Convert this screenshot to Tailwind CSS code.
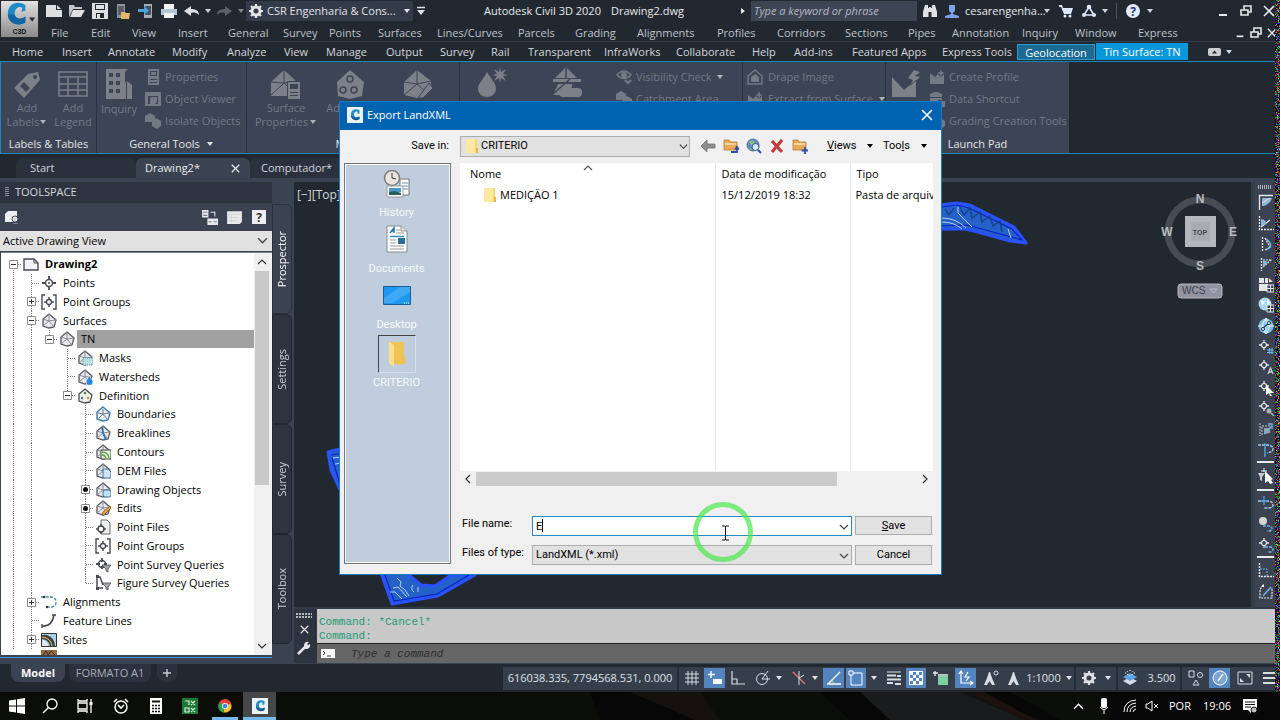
<!DOCTYPE html>
<html lang="en">
<head>
<meta charset="utf-8">
<title>Autodesk Civil 3D 2020 - Drawing2.dwg</title>
<script src="https://cdn.jsdelivr.net/npm/@tailwindcss/browser@4"></script>
</head>
<body class="bg-[#212830] font-['Open_Sans','Noto_Sans',sans-serif] text-[11px] leading-4 text-[#d0d3d8]">

<svg class="hidden" aria-hidden="true">
  <!-- generic marks -->
  <symbol id="caret" viewBox="0 0 8 8"><path d="M1 2h6L4 6z" fill="currentColor"/></symbol>
  <symbol id="chev" viewBox="0 0 10 10"><path d="M1 3l4 4 4-4" fill="none" stroke="currentColor" stroke-width="1.2"/></symbol>
  <symbol id="cross" viewBox="0 0 12 12"><path d="M1 1l10 10M11 1L1 11" fill="none" stroke="currentColor" stroke-width="1.6"/></symbol>
  <symbol id="min" viewBox="0 0 12 12"><path d="M2 10h8" stroke="currentColor" stroke-width="2"/></symbol>
  <symbol id="restore" viewBox="0 0 12 12"><path d="M1 5h7v5H1zM4 5V1h7v6H8" fill="none" stroke="currentColor" stroke-width="1.6"/></symbol>
  <symbol id="gear" viewBox="0 0 16 16"><circle cx="8" cy="8" r="4" fill="none" stroke="currentColor" stroke-width="3"/><path d="M8 1v3M8 12v3M1 8h3M12 8h3M3 3l2 2M11 11l2 2M13 3l-2 2M5 11l-2 2" stroke="currentColor" stroke-width="2.2"/></symbol>
  <symbol id="clogo" viewBox="0 0 16 16"><path fill="#eaf3f8" d="M0 0h16v16H0z"/><path fill="#2a8fc4" d="M12.500 3C9 1.500 4.500 2 4 7c-.5 5 4.500 7.500 8.500 5V9.500C10 11 7 10.500 7 7.500c0-3 2.500-3.500 3.500-2.500V7l2-.5z"/><path fill="#0c5a91" d="M4 8c0 5 5 6.500 8.500 4V9.500C10 11.500 6.500 11 4 8z"/></symbol>
  <!-- quick access -->
  <symbol id="new" viewBox="0 0 16 16"><path fill="#dde0e3" d="M0 2h10v5h6v7H0z"/><path fill="#dde0e3" d="M11 2l4 4h-4z"/></symbol>
  <symbol id="open" viewBox="0 0 16 16"><path fill="#c3c6ca" d="M0 14V2h5l1 2h7v2H4z"/><path fill="#dde0e3" d="M4 7h12l-4 7H1z"/></symbol>
  <symbol id="save" viewBox="0 0 16 16"><path fill="#dde0e3" fill-rule="evenodd" d="M0 0h16v16H0zM3 1v6h10V1zM4 10v5h8v-5z"/><path fill="#dde0e3" d="M5 11h3v4H5zM4 2h8v4H4z"/></symbol>
  <symbol id="opend" viewBox="0 0 16 16"><path fill="#8f959d" d="M2 1h8v14H2z"/><path fill="#565d68" d="M3 3h6v9H3z"/><path fill="#e3b76a" d="M6 9h4l1 1h4l-1 6H6z"/></symbol>
  <symbol id="saved" viewBox="0 0 16 16"><path fill="#a9aeb5" d="M6 1h8v14H6z"/><path fill="#4a515c" d="M7 3h6v9H7z"/><path fill="#4aa3df" d="M0 6h6V3l5 4.500L6 12V9H0z"/></symbol>
  <symbol id="print" viewBox="0 0 16 16"><path fill="#f2f3f4" d="M3 1h10v5H3z"/><path fill="#b4c7d6" d="M0 6h16v6H0z"/><path fill="#f2f3f4" d="M3 10h10v5H3z"/></symbol>
  <symbol id="undo" viewBox="0 0 16 16"><path fill="currentColor" d="M0 8l7-5v3c5 0 8 2 8 6-2-2-4-3-8-2v3z"/></symbol>
  <symbol id="bino" viewBox="0 0 16 16"><path fill="#dfe1e4" d="M3 2h3v3h1V4h2v1h1V2h3l2 7v5H9.500V9h-3v5H1V9z"/></symbol>
  <symbol id="user" viewBox="0 0 16 16"><path fill="#7ea0e6" d="M5 2h6v6l-2 2v1l6 2v2H1v-2l6-2v-1L5 8z"/></symbol>
  <symbol id="cart" viewBox="0 0 16 16"><path fill="#dfe6ff" d="M1 2h3l1 3h10l-2 6H6L3 4H1z"/><circle cx="7" cy="13" r="1.500" fill="#dfe6ff"/><circle cx="12" cy="13" r="1.500" fill="#dfe6ff"/></symbol>
  <symbol id="share" viewBox="0 0 16 16"><path d="M8 4l5 8H3z" fill="none" stroke="#dfe6ff" stroke-width="1.600"/><circle cx="8" cy="4" r="2.300" fill="#dfe6ff"/><circle cx="3" cy="12" r="2" fill="#dfe6ff"/><circle cx="13" cy="12" r="2" fill="#dfe6ff"/></symbol>
  <!-- ribbon, large -->
  <symbol id="tag" viewBox="0 0 32 32"><path fill="currentColor" fill-rule="evenodd" d="M17 6l10-2 2 8-16 18L3 20zM24 7a2 2 0 1 0 .1 0zM13 14l6 6-4 4-6-6z"/></symbol>
  <symbol id="table" viewBox="0 0 32 32"><path d="M2 4h28v24H2zM2 9h28M2 16h28M2 22h28M11 9v19M21 9v19" fill="none" stroke="currentColor" stroke-width="1.500"/></symbol>
  <symbol id="inq" viewBox="0 0 32 32"><path fill="currentColor" fill-rule="evenodd" d="M3 1h22l-3 3v10h1v17H3zM6 5v4h4V5zM13 5v4h4V5zM6 13v4h4v-4zM13 13v4h4v-4zM6 21v4h4v-4zM13 21v4h4v-4z"/><path fill="currentColor" d="M24 13l5 4v14h-5z"/></symbol>
  <symbol id="surfp" viewBox="0 0 32 32"><path fill="currentColor" d="M1 14L14 2l12 11v15H1z"/><path d="M1 27l13-12V2M14 15l12 12M1 14l13 1 12-2" stroke="#3d4455" fill="none"/><path fill="#3d4455" d="M17 13h14v18H17z"/><path fill="currentColor" fill-rule="evenodd" d="M18 14h12v17H18zM20 16v5h8v-5zM20 24v1h8v-1zM20 27v1h8v-1z"/></symbol>
  <symbol id="surfd" viewBox="0 0 32 32"><path fill="currentColor" d="M16 2l14 12-2 14-12 3-12-3L3 14z"/><g fill="currentColor" stroke="#3d4455" stroke-width="1.500"><circle cx="16" cy="11" r="3"/><circle cx="9" cy="22" r="3"/><circle cx="20" cy="22" r="3"/></g></symbol>
  <symbol id="surfe" viewBox="0 0 32 32"><path fill="currentColor" d="M2 14L15 2l14 11v6l-9 8-5 3L2 27z"/><path d="M2 27l13-11V2M15 16l9 8M2 14l13 2 14-3" stroke="#3d4455" fill="none"/><path fill="currentColor" stroke="#3d4455" d="M27 15l4 5-10 10h-5z"/></symbol>
  <symbol id="drop" viewBox="0 0 32 32"><path fill="currentColor" d="M11 6c4 7 9 11 9 17a9 8 0 0 1-18 0C2 17 8 13 11 6z"/><path fill="currentColor" d="M24 1l1 5 5-3-3 5 5 1-5 1 3 5-5-3-1 5-1-5-5 3 3-5-5-1 5-1-3-5 5 3z"/></symbol>
  <symbol id="house" viewBox="0 0 32 32"><path fill="currentColor" d="M16 1l11 11H5zM3 13h28v3H3zM8 18h14v3l-9 8H3z"/><path d="M16 1v11M2 29l18-16" stroke="#3d4455" stroke-width="1.500"/><rect x="9" y="22" width="23" height="9" rx="4" fill="currentColor"/></symbol>
  <symbol id="profm" viewBox="0 0 32 32"><path fill="currentColor" d="M2 9l12 13 12-10v17H2zM24 2l-6 8 5 2-3 6 10-9-5-1 5-4z"/></symbol>
  <!-- ribbon, small -->
  <symbol id="sprop" viewBox="0 0 16 16"><path fill="currentColor" fill-rule="evenodd" d="M3 0h11v16H3zM5 2v5h7V2zM5 10v1h7v-1zM5 13v1h7v-1z"/><path fill="currentColor" d="M6 3h5v3H6z"/></symbol>
  <symbol id="sview" viewBox="0 0 16 16"><path fill="currentColor" fill-rule="evenodd" d="M0 1h16v14H0zM3 5v8h10V5z"/><path fill="currentColor" d="M5 7l2-1h5v5l-2 2H5z"/></symbol>
  <symbol id="siso" viewBox="0 0 16 16"><path fill="currentColor" d="M0 3l5-3 5 3v6H0zM7 8l4-3 5 3v5l-4 3-5-3z"/></symbol>
  <symbol id="eye" viewBox="0 0 16 16"><path d="M1 6q7-8 14 0-7 7-14 0z" fill="none" stroke="currentColor" stroke-width="1.500"/><circle cx="8" cy="6" r="3" fill="currentColor"/><path d="M9 11l3 3 3-3" fill="none" stroke="currentColor" stroke-width="2"/></symbol>
  <symbol id="shome" viewBox="0 0 16 16"><path d="M1 7l7-6 7 6v8H1z" fill="none" stroke="currentColor" stroke-width="1.500"/><path fill="currentColor" d="M4 8l4-3 4 3v5H4z"/></symbol>
  <symbol id="sprof" viewBox="0 0 16 16"><path fill="currentColor" d="M1 4l5 4 3-3 3 3 3-3v10H1zM12 0l1 3 3 1-3 1-1 3-1-3-3-1 3-1z"/></symbol>
  <symbol id="sdb" viewBox="0 0 16 16"><path fill="currentColor" d="M1 3q6-4 12 0v3H1zM1 7h12v2H9v5H1zM10 10h6v6h-6z"/></symbol>
  <!-- tree guides -->
  <symbol id="g-v" viewBox="0 0 18 19"><path d="M9.500 0v19" stroke="#808080" stroke-dasharray="1 1"/></symbol>
  <symbol id="g-t" viewBox="0 0 18 19"><path d="M9.500 0v19M10 9.500h8" stroke="#808080" stroke-dasharray="1 1"/></symbol>
  <symbol id="g-l" viewBox="0 0 18 19"><path d="M9.500 0v10M10 9.500h8" stroke="#808080" stroke-dasharray="1 1" fill="none"/></symbol>
  <symbol id="g-minus" viewBox="0 0 18 19"><path d="M9.500 0v19M10 9.500h8" stroke="#808080" stroke-dasharray="1 1"/><path d="M5.500 5.500h8v8h-8z" fill="#fff" stroke="#8c8c8c"/><path d="M7 9.500h5" stroke="#333"/></symbol>
  <symbol id="g-root" viewBox="0 0 18 19"><path d="M9.500 13v6M14 9.500h4" stroke="#808080" stroke-dasharray="1 1"/><path d="M5.500 5.500h8v8h-8z" fill="#fff" stroke="#8c8c8c"/><path d="M7 9.500h5" stroke="#333"/></symbol>
  <symbol id="g-last" viewBox="0 0 18 19"><path d="M9.500 0v6M14 9.500h4" stroke="#808080" stroke-dasharray="1 1"/><path d="M5.500 5.500h8v8h-8z" fill="#fff" stroke="#8c8c8c"/><path d="M7 9.500h5" stroke="#333"/></symbol>
  <symbol id="g-plus" viewBox="0 0 18 19"><path d="M9.500 0v19M10 9.500h8" stroke="#808080" stroke-dasharray="1 1"/><path d="M5.500 5.500h8v8h-8z" fill="#fff" stroke="#8c8c8c"/><path d="M7 9.500h5M9.500 7v5" stroke="#333"/></symbol>
  <symbol id="g-dot" viewBox="0 0 18 19"><path d="M9.500 0v19M10 9.500h8" stroke="#808080" stroke-dasharray="1 1"/><path d="M5.500 5.500h8v8h-8z" fill="#fff" stroke="#8c8c8c"/><circle cx="9.500" cy="9.500" r="2.500" fill="#111"/></symbol>
  <!-- tree icons -->
  <symbol id="t-dwg" viewBox="0 0 16 16"><path d="M1 3h10l4 4v7H1z" fill="#f3f3f5" stroke="#4a4a55" stroke-width="1.400"/><path d="M11 3v4h4" fill="none" stroke="#4a4a55"/></symbol>
  <symbol id="t-pt" viewBox="0 0 16 16"><circle cx="8" cy="8" r="3.500" fill="#fff" stroke="#4a4a55" stroke-width="1.500"/><path d="M8 1v4M8 11v4M1 8h4M11 8h4" stroke="#4a4a55" stroke-width="1.800"/><circle cx="8" cy="8" r="1" fill="#4a4a55"/></symbol>
  <symbol id="t-pg" viewBox="0 0 16 16"><path d="M4 1H1v14h3M12 1h3v14h-3" fill="none" stroke="#4a4a55" stroke-width="1.400"/><circle cx="8" cy="8" r="2.500" fill="#fff" stroke="#4a4a55" stroke-width="1.300"/><path d="M8 3v3M8 10v3M3 8h3M10 8h3" stroke="#4a4a55" stroke-width="1.500"/></symbol>
  <symbol id="t-sf" viewBox="0 0 16 16"><path d="M8 1l7 6-2 7-5 1-6-2V6z" fill="#e9eaee" stroke="#55565f" stroke-width="1.300"/><path d="M8 1v7l-6 5M8 8l5 6M2 6l6 2 7-1" stroke="#8a8c96" fill="none"/></symbol>
  <symbol id="t-mask" viewBox="0 0 16 16"><use href="#t-sf"/><path d="M6 8h10v7H6z" fill="#b9dde0" stroke="#5a9a9f" stroke-dasharray="1 1"/></symbol>
  <symbol id="t-water" viewBox="0 0 16 16"><use href="#t-sf"/><path d="M12 6c2 4 4 5 4 7a3 3 0 0 1-7 0c0-2 2-3 3-7z" fill="#2f86d6" stroke="#fff" stroke-width=".6"/></symbol>
  <symbol id="t-def" viewBox="0 0 16 16"><path d="M8 1l7 6-2 7-5 1-6-2V6z" fill="#eef2e6" stroke="#4a4a55" stroke-width="1.300"/><circle cx="8" cy="5" r="1.200" fill="#4a8a40"/><circle cx="5" cy="10" r="1.200" fill="#3d6fb5"/><circle cx="11" cy="10" r="1.200" fill="#c98a2a"/></symbol>
  <symbol id="t-bnd" viewBox="0 0 16 16"><path d="M8 1l7 6-2 7-5 1-6-2V6z" fill="#e6eef6" stroke="#3f7ca8" stroke-width="1.400"/><path d="M8 3v5l-4 4M8 8l4 5M3 7l5 1 6-1" stroke="#777985" fill="none"/></symbol>
  <symbol id="t-brk" viewBox="0 0 16 16"><use href="#t-sf"/><path d="M7 2l1 6 3 7" stroke="#2a78b8" stroke-width="1.800" fill="none"/></symbol>
  <symbol id="t-cnt" viewBox="0 0 16 16"><use href="#t-sf"/><path d="M6 6h10v9H6z" fill="#eaf5df" stroke="#444"/><path d="M7 8q6 0 7 6M7 11q3 0 4 3" stroke="#58a33c" stroke-width="1.300" fill="none"/></symbol>
  <symbol id="t-dem" viewBox="0 0 16 16"><use href="#t-sf"/><path d="M8 6h5l3 3v6H8z" fill="#cfe3f4" stroke="#3a73a8"/></symbol>
  <symbol id="t-obj" viewBox="0 0 16 16"><use href="#t-sf"/><rect x="8" y="8" width="8" height="7" rx="2" fill="#bfe0f5" stroke="#3a73a8"/></symbol>
  <symbol id="t-edit" viewBox="0 0 16 16"><use href="#t-sf"/><path d="M15 6l1 2-7 7-2 0 1-3z" fill="#e5a54a" stroke="#7b4a18" stroke-width=".8"/></symbol>
  <symbol id="t-pf" viewBox="0 0 16 16"><path d="M6 1h6l3 3v11H6z" fill="#eceef0" stroke="#6a6c75"/><circle cx="6" cy="10" r="3" fill="#fff" stroke="#4a4a55" stroke-width="1.400"/><path d="M6 5v3M6 12v3M1 10h3M8 10h3" stroke="#4a4a55" stroke-width="1.500"/></symbol>
  <symbol id="t-psq" viewBox="0 0 16 16"><circle cx="7" cy="7" r="3.500" fill="#fff" stroke="#4a4a55" stroke-width="1.500"/><path d="M7 1v4M1 7h4M7 9v3M9 7h3" stroke="#4a4a55" stroke-width="1.800"/><path d="M7 8h9l-3 4v3l-2-1v-2z" fill="#a6a8ae" stroke="#4a4a55" stroke-width=".8"/></symbol>
  <symbol id="t-fsq" viewBox="0 0 16 16"><path d="M2 2v11h6M2 2h3l3 8" fill="none" stroke="#4a4a55" stroke-width="1.500"/><path d="M1 0h3v3H1zM1 12h3v3H1z" fill="#4a4a55"/><path d="M7 8h9l-3 4v3l-2-1v-2z" fill="#a6a8ae" stroke="#4a4a55" stroke-width=".8"/></symbol>
  <symbol id="t-al" viewBox="0 0 16 16"><path d="M0 3h11q4 1 4 5t-4 5H5" fill="none" stroke="#4c8d99" stroke-width="1.400" stroke-dasharray="3 1.500"/><circle cx="3" cy="3" r="1.200" fill="#333"/><circle cx="6" cy="13" r="1.200" fill="#333"/></symbol>
  <symbol id="t-fl" viewBox="0 0 16 16"><path d="M1 13q10 1 12-11" fill="none" stroke="#444650" stroke-width="1.600"/><path d="M11 2h4M1 11v4" stroke="#444650" stroke-width="1.400"/></symbol>
  <symbol id="t-site" viewBox="0 0 16 16"><path fill="#a9d0ea" stroke="#333" d="M.5 1.500h15v13H.5z"/><path fill="#3f4045" d="M1 3h5q8 3 8 11H9Q8 8 1 7z"/><path d="M1 5q9 1 10 9" stroke="#e7d24a" fill="none"/><path fill="#e8e8e8" d="M1 8q6 1 6 6H1z"/></symbol>
  <!-- canvas tool palette -->
  <symbol id="p-a" viewBox="0 0 16 16"><path d="M1.500 16V1.500H15" fill="none" stroke="#e8eaee" stroke-width="1.300"/><path d="M4 4h10q-2 6-8 8H4z" fill="#8fb6d6"/><path d="M4 9l8-5" stroke="#e8eaee"/></symbol>
  <symbol id="p-b" viewBox="0 0 16 16"><path d="M1.500 1v13.500H16" fill="none" stroke="#e8eaee" stroke-width="1.300" stroke-dasharray="2 1"/><path d="M3 12L12 5" stroke="#e8eaee" stroke-width="1.400"/><path d="M3 4q6 1 5 5l-5 2z" fill="#8fb6d6"/></symbol>
  <symbol id="p-c" viewBox="0 0 16 16"><path d="M4.500 1v14M7 2l5 9M7 14l6-3" fill="none" stroke="#e8eaee" stroke-width="1.300" stroke-dasharray="2 1"/><path d="M8 3q6 4 4 8l-4 3" fill="none" stroke="#7cb5de" stroke-width="1.500"/></symbol>
  <symbol id="p-d" viewBox="0 0 16 16"><path d="M3.500 2v13" fill="none" stroke="#e8eaee" stroke-width="1.300" stroke-dasharray="2 1"/><path d="M5 11L14 3M5 4h8" stroke="#e8eaee" stroke-width="1.200" stroke-dasharray="2 1"/><path d="M5 4q5 1 4 4l-4 3z" fill="#8fb6d6"/></symbol>
  <symbol id="p-grid" viewBox="0 0 16 16"><path fill="#e3e5e8" d="M1 1h5v5H1zM7 1h3v5H7zM11 1l4 4h-4zM1 7h9v7H1z"/><path d="M9 8h7v7H9z" fill="#3b4252" stroke="#e8eaee"/><path d="M12.500 8v7M9 11.500h7" stroke="#e8eaee"/></symbol>
  <symbol id="p-globe" viewBox="0 0 16 16"><circle cx="7" cy="7" r="6.500" fill="#a8d8f0"/><path d="M2 3l5 1-2 5zM9 2l4 4-4 2z" fill="#e9f6fc"/><path d="M9 8h7v7H9z" fill="#3b4252" stroke="#e8eaee"/><path d="M12.500 8v7M9 11.500h7" stroke="#e8eaee"/></symbol>
  <symbol id="p-earth" viewBox="0 0 16 16"><circle cx="8" cy="8" r="7.500" fill="#7cc0e6"/><path d="M0 8h16M8 0v16M8 0q-7 8 0 16M8 0q7 8 0 16" fill="none" stroke="#e9f6fc"/><path d="M5 10l6-5" stroke="#163a5c" stroke-width="1.500"/><circle cx="5" cy="11" r="1.500" fill="#fff" stroke="#163a5c"/><circle cx="11" cy="5" r="1.500" fill="#fff" stroke="#163a5c"/></symbol>
  <symbol id="p-pt" viewBox="0 0 16 16"><circle cx="6" cy="6" r="2.500" fill="none" stroke="#e8eaee" stroke-width="1.200"/><path d="M6 1v3M6 8v3M1 6h3M8 6h3" stroke="#e8eaee" stroke-width="1.300"/></symbol>
  <symbol id="p-hash" viewBox="0 0 16 16"><use href="#p-pt"/><path d="M11.500 9v6M14 9v6M9 11h6.500M9 13.500h6.500" stroke="#6fb4ec" stroke-width="1.200"/></symbol>
  <symbol id="p-let" viewBox="0 0 16 16"><use href="#p-pt"/><path d="M10 15l2.500-6 2.500 6M11 13h3" fill="none" stroke="#c9ccd2" stroke-width="1.300"/></symbol>
  <symbol id="p-cur" viewBox="0 0 16 16"><use href="#p-pt"/><path d="M8 5l8 8h-4l2 3h-2l-1-3-3 2z" fill="#fff"/></symbol>
  <symbol id="p-mag" viewBox="0 0 16 16"><use href="#p-pt"/><circle cx="11" cy="11" r="2.500" fill="#aeb2ba"/><path d="M13 13l3 3" stroke="#aeb2ba" stroke-width="1.500"/></symbol>
  <symbol id="p-box" viewBox="0 0 16 16"><path d="M2 2v13M4 14V5h9" stroke="#c9ccd2" stroke-dasharray="2 1" fill="none"/><path d="M6 13V7l6 0v5z" fill="#9aa0aa"/><path d="M6 13l8-8M10 3h4v5" stroke="#6fb4ec" stroke-width="1.300" fill="none"/></symbol>
  <symbol id="p-curve" viewBox="0 0 16 16"><path d="M0 3h10q5 1 5 4t-6 4" fill="none" stroke="#a9cbe6" stroke-width="1.400" stroke-dasharray="3 1"/><path d="M7 1v14" stroke="#4ea3e0" stroke-width="1.500"/></symbol>
  <symbol id="p-loop" viewBox="0 0 16 16"><path d="M0 6h11q4 1 4 4t-5 3H6" fill="none" stroke="#a9cbe6" stroke-width="1.400" stroke-dasharray="3 1"/><path d="M6 1v9M3 6h6" stroke="#4ea3e0" stroke-width="1.300"/></symbol>
  <symbol id="p-ball" viewBox="0 0 16 16"><circle cx="5" cy="5" r="4" fill="#d3d5d9"/><path d="M5 10h7q4 2 0 5H9" fill="none" stroke="#6fb4ec" stroke-width="1.400" stroke-dasharray="3 1"/></symbol>
  <symbol id="p-ptl" viewBox="0 0 16 16"><use href="#p-pt"/><path d="M7 10h6q4 2 0 5h-3" fill="none" stroke="#6fb4ec" stroke-width="1.400" stroke-dasharray="3 1"/></symbol>
  <symbol id="p-sel" viewBox="0 0 16 16"><path d="M1 5h7l-3 4v4L3 12V9z" fill="#c9ccd2"/><path d="M7 0v4M4 3h6" stroke="#e8eaee"/><path d="M8 3l8 8-2 1 2 3-3 1-2-3-3 2z" fill="#fff"/></symbol>
  <symbol id="p-ang" viewBox="0 0 16 16"><path d="M1.500 1v13.500H16" fill="none" stroke="#e8eaee" stroke-width="1.400" stroke-dasharray="2 1"/><path d="M2 7h7v7" fill="none" stroke="#6fb4ec" stroke-dasharray="2 1"/></symbol>
  <symbol id="p-ang2" viewBox="0 0 16 16"><path d="M5 2L2 7v8h12V5" fill="none" stroke="#e8eaee" stroke-width="1.200" stroke-dasharray="2 1"/><path d="M5 13l8-9" stroke="#6fb4ec" stroke-width="1.500"/><path d="M3 4l3-3v3z" fill="#fff"/></symbol>
  <!-- dialog -->
  <symbol id="folder" viewBox="0 0 16 16"><path fill="#f7d774" d="M2 1h11v14H2z"/><path fill="#ffe9a2" d="M2 1h9v14H2z"/><path fill="#e5b945" d="M12 10h2v5h-2z"/></symbol>
  <symbol id="back" viewBox="0 0 16 16"><path d="M1 8l6-6v4h8v4H7v4z" fill="#8f8f8f" stroke="#6e6e6e" stroke-width=".8"/></symbol>
  <symbol id="fup" viewBox="0 0 16 16"><path d="M1 2h5l1 2h7v8H1z" fill="#e9a95a" stroke="#b97a2e" stroke-width=".8"/><path d="M2 5h11v2H2z" fill="#f8d49a"/><path d="M8 14h6V10M12 11.500l2-2.500 2 2.500" stroke="#2c4ea8" stroke-width="1.800" fill="none"/></symbol>
  <symbol id="web" viewBox="0 0 16 16"><circle cx="7" cy="7" r="6" fill="#5f8fc4" stroke="#44618a" stroke-width=".8"/><path d="M3 4q3-3 6 0l-3 4zM3 9l3 3-2 0z" fill="#8fbf7c"/><circle cx="9.500" cy="9" r="3.500" fill="#dcebfa" stroke="#33558f"/><path d="M12 12l3 3" stroke="#2c4ea8" stroke-width="2"/></symbol>
  <symbol id="del" viewBox="0 0 16 16"><path d="M3 3l10 11M13 2L3 14" stroke="#c23a3f" stroke-width="3.200"/></symbol>
  <symbol id="fnew" viewBox="0 0 16 16"><path d="M1 2h5l1 2h7v8H1z" fill="#e9a95a" stroke="#b97a2e" stroke-width=".8"/><path d="M2 5h11v2H2z" fill="#f8d49a"/><path d="M13 9v7M9.500 12.500h7" stroke="#2c4ea8" stroke-width="1.800"/></symbol>
</svg>

<div class="relative flex h-screen flex-col overflow-hidden">

  <!-- title bar and menu bar -->
  <header class="flex h-[42px] shrink-0 border-b border-[#363e4a] bg-[#212830]">
    <button aria-label="Application menu" class="mr-[3px] h-[38px] w-[39px] shrink-0 border border-[#2a2a2a] bg-gradient-to-b from-[#e2e2e2] to-[#8b8b8b]">
      <svg viewBox="0 0 38 37" class="size-full"><path fill="#1c8ac6" d="M25 4C16-1 8 3 7 12c-1 9 10 15 18 10v-6c-5 4-11 2-11-3 0-6 5-8 8-6l-1 4 4-1z"/><path fill="#1464a0" d="M7 14c0 9 10 13 18 8v-6c-5 4-10 2-11-2z"/><path d="M29 17h6l-3 4z" fill="#222"/><text x="19" y="34" text-anchor="middle" font-size="7" font-weight="700" font-family="Liberation Sans, sans-serif" fill="#111">C3D</text></svg>
    </button>
    <div class="flex min-w-0 flex-1 flex-col">
      <div class="flex h-[21px] items-center">
        <button aria-label="New" class="grid w-[23px] place-items-center"><svg class="size-4"><use href="#new"/></svg></button>
        <button aria-label="Open" class="grid w-[23px] place-items-center"><svg class="size-4"><use href="#open"/></svg></button>
        <button aria-label="Save drawing" class="grid w-[23px] place-items-center"><svg class="size-4"><use href="#save"/></svg></button>
        <button aria-label="Open from mobile" class="grid w-[23px] place-items-center"><svg class="size-4"><use href="#opend"/></svg></button>
        <button aria-label="Save to mobile" class="grid w-[23px] place-items-center"><svg class="size-4"><use href="#saved"/></svg></button>
        <button aria-label="Plot" class="grid w-[23px] place-items-center"><svg class="size-4"><use href="#print"/></svg></button>
        <button aria-label="Undo" class="grid w-[23px] place-items-center text-[#dde0e3]"><svg class="size-4"><use href="#undo"/></svg></button>
        <svg class="h-2 w-[10px]"><use href="#caret"/></svg>
        <button aria-label="Redo" class="grid w-[23px] -scale-x-100 place-items-center text-[#5b626d]"><svg class="size-4"><use href="#undo"/></svg></button>
        <svg class="h-2 w-[10px] text-[#7d838c]"><use href="#caret"/></svg>
        <button class="flex h-5 w-[167px] shrink-0 items-center gap-[3px] bg-[#333a48] px-[2px] text-[#e2e4e8]">
          <svg class="size-4 shrink-0"><use href="#gear"/></svg><span class="flex-1 text-left whitespace-nowrap">CSR Engenharia &amp; Cons...</span><svg class="size-2 shrink-0"><use href="#caret"/></svg>
        </button>
        <svg viewBox="0 0 16 10" class="h-[10px] w-4"><path d="M4 1.500h8" stroke="#dde0e3" stroke-width="1.500"/><path d="M4 4h8L8 9z" fill="#dde0e3"/></svg>
        <h1 class="flex flex-1 justify-center gap-[10px] whitespace-nowrap text-[#e8eaec]"><span>Autodesk Civil 3D 2020</span><span>Drawing2.dwg</span></h1>
        <svg viewBox="0 0 8 8" class="mr-1 size-2"><path d="M2 1l4 3-4 3z" fill="#e8eaec"/></svg>
        <input type="text" aria-label="Search" placeholder="Type a keyword or phrase" class="h-5 w-[166px] shrink-0 bg-[#3d4454] px-[3px] italic placeholder:text-[#b5b9c0]">
        <button aria-label="Find" class="grid w-[26px] place-items-center"><svg class="size-4"><use href="#bino"/></svg></button>
        <svg class="mr-1 h-4 w-[18px]"><use href="#user"/></svg>
        <span class="w-[76px] whitespace-nowrap text-[#e8eaec]">cesarengenha...</span>
        <svg class="h-2 w-3"><use href="#caret"/></svg>
        <button aria-label="App store" class="grid w-[26px] place-items-center"><svg class="size-4"><use href="#cart"/></svg></button>
        <button aria-label="Share" class="grid w-5 place-items-center"><svg class="size-4"><use href="#share"/></svg></button>
        <svg class="h-2 w-3"><use href="#caret"/></svg>
        <span class="mx-[5px] h-4 border-l border-[#4c5460]"></span>
        <button aria-label="Help" class="grid w-[22px] place-items-center"><span class="grid size-[14px] place-items-center rounded-full bg-[#e6ecff] text-xs font-bold text-[#2a3a7a]">?</span></button>
        <svg class="h-2 w-3"><use href="#caret"/></svg>
        <span class="ml-[55px] flex text-[#e8eaec]">
          <button aria-label="Minimize" class="grid w-[23px] place-items-center"><svg class="size-3"><use href="#min"/></svg></button>
          <button aria-label="Restore" class="grid w-[23px] place-items-center"><svg class="size-3"><use href="#restore"/></svg></button>
          <button aria-label="Close" class="grid w-[23px] place-items-center"><svg class="size-3"><use href="#cross"/></svg></button>
        </span>
      </div>
      <nav class="flex h-5 items-center pt-1 pl-[9px] text-[#bfc3c9]">
        <a href="#" class="w-10">File</a><a href="#" class="w-[41px]">Edit</a><a href="#" class="w-[46px]">View</a><a href="#" class="w-[50px]">Insert</a><a href="#" class="w-[55px]">General</a><a href="#" class="w-[46px]">Survey</a><a href="#" class="w-[49px]">Points</a><a href="#" class="w-[59px]">Surfaces</a><a href="#" class="w-[81px]">Lines/Curves</a><a href="#" class="w-[57px]">Parcels</a><a href="#" class="w-[62px]">Grading</a><a href="#" class="w-20">Alignments</a><a href="#" class="w-[60px]">Profiles</a><a href="#" class="w-[68px]">Corridors</a><a href="#" class="w-[63px]">Sections</a><a href="#" class="w-11">Pipes</a><a href="#" class="w-[70px]">Annotation</a><a href="#" class="w-[53px]">Inquiry</a><a href="#" class="w-[63px]">Window</a><a href="#" class="flex-1">Express</a>
        <span class="flex text-[#e8eaec]">
          <button aria-label="Minimize drawing" class="grid w-4 place-items-center"><svg class="size-[10px]"><use href="#min"/></svg></button>
          <button aria-label="Restore drawing" class="grid w-4 place-items-center"><svg class="size-3"><use href="#restore"/></svg></button>
          <button aria-label="Close drawing" class="grid w-4 place-items-center"><svg class="size-[10px]"><use href="#cross"/></svg></button>
        </span>
      </nav>
    </div>
  </header>

  <!-- ribbon tabs -->
  <nav class="flex h-[19px] shrink-0 items-center bg-[#212830] pl-3 text-[#d3d6da]">
    <a href="#" class="w-[50px]">Home</a><a href="#" class="w-[46px]">Insert</a><a href="#" class="w-16">Annotate</a><a href="#" class="w-[55px]">Modify</a><a href="#" class="w-[57px]">Analyze</a><a href="#" class="w-[42px]">View</a><a href="#" class="w-[60px]">Manage</a><a href="#" class="w-[54px]">Output</a><a href="#" class="w-[51px]">Survey</a><a href="#" class="w-[37px]">Rail</a><a href="#" class="w-[76px]">Transparent</a><a href="#" class="w-[72px]">InfraWorks</a><a href="#" class="w-[76px]">Collaborate</a><a href="#" class="w-[42px]">Help</a><a href="#" class="w-[58px]">Add-ins</a><a href="#" class="w-[90px]">Featured Apps</a><a href="#" class="w-[75px]">Express Tools</a>
    <a href="#" class="mr-px grid h-4 w-[78px] place-items-center border border-[#2f9bcf] bg-[#1a6a92] text-white">Geolocation</a>
    <a href="#" class="grid h-[17px] w-[92px] place-items-center bg-[#0a97d9] text-white">Tin Surface: TN</a>
    <button aria-label="Minimize ribbon" class="ml-5 flex items-center gap-1"><svg viewBox="0 0 13 8" class="h-2 w-[13px]"><rect width="13" height="8" rx="2" fill="#c9ccd1"/><path d="M4 5.500h5L6.500 2.500z" fill="#212830"/></svg><svg class="size-2"><use href="#caret"/></svg></button>
  </nav>

  <!-- ribbon -->
  <section class="flex h-[93px] shrink-0 border-y border-[#1c86b4] bg-[#212830] text-[#737985]">
    <div class="flex w-[97px] shrink-0 flex-col border-r border-l border-r-[#2b313d] border-l-[#1c86b4] bg-[#3d4455]">
      <div class="flex flex-1 justify-center pt-1.5 pl-[3px] text-center">
        <button class="flex w-[46px] flex-col items-center"><svg class="mb-px size-8 text-[#7b8089]"><use href="#tag"/></svg><span class="leading-[14px]">Add<br><span class="flex items-center">Labels<svg class="size-2 text-[#aeb2b9]"><use href="#caret"/></svg></span></span></button>
        <button class="flex w-[46px] flex-col items-center"><svg class="mb-px size-8 text-[#7b8089]"><use href="#table"/></svg><span class="leading-[14px]">Add<br>Legend</span></button>
      </div>
      <h2 class="pb-px text-center text-[#e3e5e8]">Labels &amp; Tables</h2>
    </div>
    <div class="flex w-[150px] shrink-0 flex-col border-r border-[#2b313d] bg-[#3d4455]">
      <div class="flex flex-1 gap-2 pt-1.5 pl-1">
        <button class="flex flex-col items-center self-start"><svg class="mb-px size-8 text-[#7b8089]"><use href="#inq"/></svg>Inquiry</button>
        <ul class="flex flex-col gap-[6px] pt-px whitespace-nowrap">
          <li><button class="flex items-center gap-1"><svg class="size-4"><use href="#sprop"/></svg>Properties</button></li>
          <li><button class="flex items-center gap-1"><svg class="size-4"><use href="#sview"/></svg>Object Viewer</button></li>
          <li><button class="flex items-center gap-1"><svg class="size-4"><use href="#siso"/></svg>Isolate Objects</button></li>
        </ul>
      </div>
      <h2 class="flex items-center justify-center gap-1.5 pb-px text-[#e3e5e8]">General Tools <svg class="size-2"><use href="#caret"/></svg></h2>
    </div>
    <div class="flex w-[213px] shrink-0 flex-col border-r border-[#2b313d] bg-[#3d4455]">
      <div class="flex flex-1 pt-1.5 pl-1.5 text-center">
        <button class="flex w-[66px] flex-col items-center"><svg class="mb-px size-8 text-[#7b8089]"><use href="#surfp"/></svg><span class="leading-[14px]">Surface<br><span class="flex items-center gap-px">Properties<svg class="size-2 text-[#aeb2b9]"><use href="#caret"/></svg></span></span></button>
        <button class="flex w-[62px] flex-col items-center"><svg class="mb-px size-8 text-[#7b8089]"><use href="#surfd"/></svg><span class="leading-[14px]">Add Data</span></button>
        <button aria-label="Edit Surface" class="flex w-[74px] flex-col items-center"><svg class="size-8 text-[#7b8089]"><use href="#surfe"/></svg></button>
      </div>
      <h2 class="pb-px text-center text-[#e3e5e8]">Modify</h2>
    </div>
    <div class="flex w-[283px] shrink-0 border-r border-[#2b313d] bg-[#3d4455] pt-1 pl-4">
      <button aria-label="Water Drop" class="w-[74px] self-start"><svg class="size-8 text-[#7b8089]"><use href="#drop"/></svg></button>
      <button aria-label="Resolve Crossing" class="w-[66px] self-start"><svg class="size-8 text-[#7b8089]"><use href="#house"/></svg></button>
      <ul class="flex flex-col gap-[6px] pt-[3px] whitespace-nowrap">
        <li><button class="flex items-center gap-1"><svg class="size-4"><use href="#eye"/></svg>Visibility Check <svg class="size-2 text-[#aeb2b9]"><use href="#caret"/></svg></button></li>
        <li><button class="flex items-center gap-1"><svg class="size-4"><use href="#siso"/></svg>Catchment Area</button></li>
      </ul>
    </div>
    <div class="flex w-[143px] shrink-0 border-r border-[#2b313d] bg-[#3d4455] pt-[7px] pl-1">
      <ul class="flex flex-col gap-[6px] whitespace-nowrap">
        <li><button class="flex items-center gap-[5px]"><svg class="size-4"><use href="#shome"/></svg>Drape Image</button></li>
        <li><button class="flex items-center gap-[5px]"><svg class="size-4"><use href="#sprof"/></svg>Extract from Surface <svg class="size-2 text-[#aeb2b9]"><use href="#caret"/></svg></button></li>
      </ul>
    </div>
    <div class="flex w-[183px] shrink-0 flex-col bg-[#3d4455]">
      <div class="flex flex-1 gap-[7px] pt-1.5 pl-1">
        <svg class="size-8 shrink-0 text-[#7b8089]"><use href="#profm"/></svg>
        <ul class="flex flex-col gap-[6px] pt-px whitespace-nowrap">
          <li><button class="flex items-center gap-1"><svg class="size-4"><use href="#sprof"/></svg>Create Profile</button></li>
          <li><button class="flex items-center gap-1"><svg class="size-4"><use href="#sdb"/></svg>Data Shortcut</button></li>
          <li><button class="flex items-center gap-1"><svg class="size-4"><use href="#siso"/></svg>Grading Creation Tools</button></li>
        </ul>
      </div>
      <h2 class="pb-px text-center text-[#e3e5e8]">Launch Pad</h2>
    </div>
  </section>

  <!-- drawing file tabs -->
  <nav class="flex h-7 shrink-0 items-end border-b-4 border-[#3b4252] bg-[#212830] pl-4">
    <a href="#" class="flex h-5 w-[120px] items-center rounded-t-md bg-[#2a313d] pl-[14px]">Start</a>
    <a href="#" class="flex h-5 w-[114px] items-center justify-between rounded-t-md bg-[#3b4252] pr-[10px] pl-[9px] text-[#e8eaec]">Drawing2* <svg class="size-[9px]"><use href="#cross"/></svg></a>
    <a href="#" class="flex h-5 w-[120px] items-center rounded-t-md bg-[#2a313d] pl-[11px]">Computador*</a>
  </nav>

  <div class="flex min-h-0 flex-1">
    <!-- toolspace -->
    <aside class="flex w-[294px] shrink-0 bg-[#3b4252]">
      <div class="flex w-[272px] flex-col">
        <h2 class="flex h-[21px] items-center gap-1.5 bg-[#2e343f] pb-px pl-[5px] text-[#d6d9dd]"><svg viewBox="0 0 4 10" class="h-[10px] w-1"><path d="M2 0v10" stroke="#8a909a" stroke-width="4" stroke-dasharray="1 1"/></svg>TOOLSPACE</h2>
        <div class="flex h-[28px] items-center gap-2 pr-[6px] pl-[5px]">
          <button aria-label="Item view" class="mr-auto"><svg viewBox="0 0 14 14" class="size-[14px]"><path fill="#eceef0" d="M3 1h9v7l-3 4H0V4z"/><circle cx="10" cy="9" r="3" fill="#eceef0" stroke="#3b4252"/><path d="M10 12v-4M13 14H8" stroke="#b5b9bf"/></svg></button>
          <button aria-label="Panorama"><svg viewBox="0 0 16 16" class="size-[17px]"><path fill="#e6e8ea" d="M1 1h6v7H1zM6 9h5v6H6zM11 9h5v6h-5z"/><path d="M2 3h4M2 6h4M7 12h3M12 12h3" stroke="#7b8089"/><path d="M9 3h4v4" stroke="#e6e8ea" fill="none"/></svg></button>
          <button aria-label="Preview"><svg viewBox="0 0 16 16" class="size-[17px]"><path fill="#e6e8ea" d="M1 2h14v10l-2 2H1z"/><path d="M1 5h14M5 5v9M1 8h10M1 11h10" stroke="#d0d3d7" stroke-width=".8"/></svg></button>
          <button aria-label="Toolspace help" class="ml-px grid size-[14px] place-items-center bg-[#eceef0] text-xs font-bold text-[#333]">?</button>
        </div>
        <div class="relative h-[20px]">
          <select aria-label="View" class="size-full appearance-none bg-[#e1e1e1] pl-[3px] text-[11px] text-black"><option>Active Drawing View</option></select>
          <svg class="pointer-events-none absolute top-1 right-1 size-[11px] text-[#444]"><use href="#chev"/></svg>
        </div>
        <div class="mt-px ml-px flex min-h-0 flex-1 overflow-hidden border-t border-[#7a7f88] bg-white text-black">
          <div class="min-w-0 flex-1 pt-[2px] pl-[3px]">
            <ul id="tree" class="grid h-[394px] auto-rows-fr"></ul>
            <svg viewBox="0 0 16 6" class="ml-[37px] h-[6px] w-4"><path fill="#9a6a3c" d="M0 1h16v5H0z"/><path d="M2 6l3-4 2 4 3-4 4 4" stroke="#333" fill="none"/></svg>
          </div>
          <div class="flex w-[18px] flex-col items-center bg-[#f0f0f0] pr-[2px]">
            <svg class="my-1 size-[10px] rotate-180 text-[#333]"><use href="#chev"/></svg>
            <span class="h-[214px] w-[14px] bg-[#c9c9c9]"></span>
            <svg class="mt-auto mb-1 size-[10px] text-[#333]"><use href="#chev"/></svg>
          </div>
        </div>
        <div class="mt-[2px] h-[6px] border-t border-[#4a9ad0]"></div>
      </div>
      <div class="flex w-[20px] flex-col pt-[22px] text-[#c9ccd2]">
        <button class="grid h-[110px] place-items-center rounded-r-md border border-[#2a303b] bg-[#3b4252] text-white"><span class="rotate-180 [writing-mode:vertical-rl]">Prospector</span></button>
        <button class="grid h-[110px] place-items-center rounded-r-md border border-[#20262f] bg-[#2d3340]"><span class="rotate-180 [writing-mode:vertical-rl]">Settings</span></button>
        <button class="grid h-[110px] place-items-center rounded-r-md border border-[#20262f] bg-[#2d3340]"><span class="rotate-180 [writing-mode:vertical-rl]">Survey</span></button>
        <button class="grid h-[110px] place-items-center rounded-r-md border border-[#20262f] bg-[#2d3340]"><span class="rotate-180 [writing-mode:vertical-rl]">Toolbox</span></button>
      </div>
    </aside>

    <div class="flex min-w-0 flex-1 flex-col">
      <div class="flex min-h-0 flex-1">
        <!-- model canvas -->
        <main class="relative min-w-0 flex-1 overflow-hidden bg-[#212830]">
          <svg viewBox="294 182 957 425" class="absolute top-0 left-0 h-[425px] w-[957px]">
            <g stroke="#2a52ff" stroke-width="3" fill="#2461c8" stroke-linejoin="round">
              <path d="M930 206l27-3 13 2 44 22 12 16-16-2-32-9-13-3-35 0z"/>
              <path d="M328 452l16-4 0 50-13-28z"/>
              <path d="M380 570l12 34 46-8 37-21h-24l-16 11-14-1-18-15z"/>
            </g>
            <g fill="none" stroke="#0a1fd0" stroke-width="1.200">
              <path d="M935 208l22-3 12 3 43 21 10 11-44-12-12-3-32 1"/><path d="M331 455l12-2M332 458l8 26"/><path d="M385 575l9 26 43-7 32-19"/>
            </g>
            <g fill="none" stroke="#173b7c" stroke-width="1.500" stroke-opacity=".8"><path d="M960 207l4 8 6-7 2 10 8-6 2 10 8-6 3 10 7-5 2 11M945 209l4 6 5-7"/></g>
            <g fill="none" stroke="#b9cdf5" stroke-width="1"><path d="M958 207v6l14 14M942 218q14 0 24 10M942 222q12 0 20 7M1008 229l3 9M397 578l4 4-1 4 5 4 4 6M393 588l5-1 9 10M390 592h5l7 7M413 585q-3 4 1 7M418 587v5M333 458l8-1M335 464l7-1"/></g>
          </svg>
          <p class="absolute top-[5px] left-[3px] text-xs text-[#d5d8dc]">[−][Top]</p>
          <svg viewBox="1160 188 80 112" class="absolute top-1.5 right-[11px] h-28 w-20 font-['Liberation_Sans',sans-serif] font-bold">
            <circle cx="1200" cy="232" r="32" fill="none" stroke="#474c54" stroke-width="7"/>
            <path d="M1185 216h31v31h-31z" fill="#b4b7bb"/><path d="M1191 222h19v19h-19z" fill="#a7acb0"/>
            <g text-anchor="middle" fill="#b9bcc1" font-size="12"><text x="1200" y="203">N</text><text x="1200" y="270">S</text><text x="1167" y="236">W</text><text x="1233" y="236">E</text></g>
            <text x="1200" y="235" text-anchor="middle" font-size="7" fill="#43484f">TOP</text>
            <rect x="1178" y="284" width="44" height="14" rx="3" fill="#9093a0" stroke="#b4b6bf"/>
            <text x="1182" y="294" font-size="10" font-weight="400" fill="#3e424d">WCS</text><path d="M1210 289h7l-3.500 4z" fill="none" stroke="#b9bbc4"/>
          </svg>
        </main>
        <!-- transparent commands palette -->
        <aside class="flex w-[29px] shrink-0 flex-col border-l-4 border-[#343b48] bg-[#3b4252] pr-[6px] pl-[2px]">
          <svg viewBox="0 0 14 4" class="my-[3px] ml-px h-1 w-[14px]"><path d="M0 2h14" stroke="#aeb2b9" stroke-width="4" stroke-dasharray="1 1"/></svg>
          <div class="grid h-[268px] auto-rows-fr place-items-center">
            <svg class="size-4"><use href="#p-a"/></svg><svg class="size-4"><use href="#p-b"/></svg><svg class="size-4"><use href="#p-c"/></svg><svg class="size-4"><use href="#p-d"/></svg><svg class="size-4"><use href="#p-grid"/></svg><svg class="size-4"><use href="#p-globe"/></svg><svg class="size-4"><use href="#p-earth"/></svg><svg class="size-4"><use href="#p-hash"/></svg><svg class="size-4"><use href="#p-let"/></svg><svg class="size-4"><use href="#p-cur"/></svg><svg class="size-4"><use href="#p-mag"/></svg><svg class="size-4"><use href="#p-box"/></svg><svg class="size-4"><use href="#p-curve"/></svg>
          </div>
          <span class="my-px h-[2px] shrink-0 bg-[#e8eaee]"></span>
          <svg class="my-1 size-4 shrink-0"><use href="#p-sel"/></svg>
          <span class="my-px h-[2px] shrink-0 bg-[#e8eaee]"></span>
          <div class="grid h-[63px] shrink-0 auto-rows-fr place-items-center">
            <svg class="size-4"><use href="#p-loop"/></svg><svg class="size-4"><use href="#p-ball"/></svg><svg class="size-4"><use href="#p-ptl"/></svg>
          </div>
          <span class="my-px h-[2px] shrink-0 bg-[#e8eaee]"></span>
          <div class="grid h-[42px] shrink-0 auto-rows-fr place-items-center">
            <svg class="size-4"><use href="#p-ang"/></svg><svg class="size-4"><use href="#p-ang2"/></svg>
          </div>
        </aside>
      </div>
      <!-- command line -->
      <section class="flex h-14 shrink-0 border-t-2 border-[#343b48]">
        <div class="flex w-[23px] flex-col items-center gap-[7px] bg-[#2e343f] pt-1 pr-[3px] text-[#e2e4e7]">
          <svg viewBox="0 0 16 5" class="h-[5px] w-4"><path d="M0 1h16M0 4h16" stroke="currentColor" stroke-width="1.500" stroke-dasharray="2 1"/></svg>
          <svg class="size-[9px]"><use href="#cross"/></svg>
          <svg viewBox="0 0 14 14" class="size-[14px]"><path d="M1 13l7-7" stroke="currentColor" stroke-width="2.500"/><path d="M7 4q1-4 5-3l-2 2 1 1 2-1q1 4-3 5H7z" fill="currentColor"/></svg>
        </div>
        <div class="flex flex-1 flex-col font-['Liberation_Mono',monospace]">
          <div class="flex-1 bg-[#c8c8c8] pt-[6px] pl-[2px] leading-[14px] text-[#219a75]"><p>Command: *Cancel*</p><p>Command:</p></div>
          <div class="flex h-5 items-center gap-4 border-t border-[#222] bg-[#666] pl-1">
            <svg viewBox="0 0 14 9" class="h-[9px] w-[14px]"><path fill="#fff" d="M0 0h14v9H0z"/><path d="M2 2l2 2-2 2M6 7h4" stroke="#333" fill="none"/></svg>
            <input type="text" aria-label="Command" placeholder="Type a command" class="flex-1 bg-transparent italic placeholder:text-[#2f2f2f]">
          </div>
        </div>
      </section>
    </div>
  </div>

  <!-- layout tabs and status bar -->
  <footer class="flex h-[29px] shrink-0 items-center border-t border-[#3b4252] bg-[#212830]">
    <nav class="flex flex-1 gap-1 self-start pl-[11px]">
      <a href="#" class="grid h-[18px] w-[54px] place-items-center rounded-b-lg bg-[#3b4252] font-bold text-white">Model</a>
      <a href="#" class="grid h-[18px] w-[82px] place-items-center rounded-b-lg bg-[#2b323e] whitespace-nowrap text-[#a9adb4]">FORMATO A1</a>
      <button aria-label="New layout" class="ml-[2px] grid h-[18px] w-5 place-items-center rounded-b-lg bg-[#2b323e]"><svg viewBox="0 0 10 10" class="size-2.5"><path d="M5 1v8M1 5h8" stroke="#c9ccd2" stroke-width="1.400"/></svg></button>
    </nav>
    <div class="flex h-[23px] shrink-0 items-center bg-[#363e4c] whitespace-nowrap text-[#dfe1e5]">
      <span class="grid h-full w-[176px] place-items-center border-r-2 border-[#262d38]">616038.335, 7794568.531, 0.000</span>
      <button aria-label="Grid" class="grid w-[25px] place-items-center"><svg viewBox="0 0 16 16" class="size-4"><path d="M4 1v14M8 1v14M12 1v14M1 4h14M1 8h14M1 12h14" stroke="#d8dbe0"/></svg></button>
      <button aria-label="Snap" class="grid h-5 w-[21px] place-items-center bg-[#5484bd]"><svg viewBox="0 0 16 16" class="size-4"><path d="M4 1v7M1 4.500h7" stroke="#fff" stroke-width="1.400"/><path fill="#fff" d="M6 9h9v5H6z"/></svg></button>
      <button aria-label="Ortho" class="grid w-[25px] place-items-center"><svg viewBox="0 0 16 16" class="size-4"><path d="M2 1v13h13M2 9h5v5" stroke="#d8dbe0" fill="none" stroke-width="1.200"/></svg></button>
      <button aria-label="Polar" class="flex w-[37px] items-center justify-center gap-1"><svg viewBox="0 0 16 16" class="size-4"><circle cx="7" cy="9" r="5.500" stroke="#d8dbe0" fill="none"/><path d="M7 9h8M7 9l6-8" stroke="#d8dbe0"/></svg><svg class="size-2"><use href="#caret"/></svg></button>
      <button aria-label="Isodraft" class="flex w-[36px] items-center justify-center gap-1"><svg viewBox="0 0 16 16" class="size-4"><path d="M2 2l12 12" stroke="#e07676" stroke-width="1.400"/><path d="M8 1v14M8 8l5-3" stroke="#d8dbe0"/></svg><svg class="size-2"><use href="#caret"/></svg></button>
      <button aria-label="Object snap tracking" class="mr-[2px] grid h-5 w-[21px] place-items-center bg-[#5484bd]"><svg viewBox="0 0 16 16" class="size-4"><path d="M1 14h14M2 14L14 2" stroke="#fff" stroke-width="1.400"/><path d="M6 10l2 4" stroke="#bfe0a0"/></svg></button>
      <button aria-label="Object snap" class="grid h-5 w-5 place-items-center bg-[#5484bd]"><svg viewBox="0 0 16 16" class="size-4"><path d="M3 3h11v12H3z" fill="none" stroke="#fff"/><path d="M1 1h4v4H1z" fill="#5484bd" stroke="#fff"/></svg></button>
      <svg class="h-2 w-4"><use href="#caret"/></svg>
      <button aria-label="Lineweight" class="grid w-[24px] place-items-center"><svg viewBox="0 0 16 16" class="size-4"><path d="M1 2h14" stroke="#d8dbe0"/><path d="M1 5.500h9M11 6h4M1 9.500h14M1 13h6M9 14h6" stroke="#d8dbe0" stroke-width="2"/></svg></button>
      <button aria-label="Transparency" class="grid h-5 w-5 place-items-center bg-[#5484bd]"><svg viewBox="0 0 16 16" class="size-4"><path d="M1.500 1.500h13v13h-13z" fill="none" stroke="#fff"/><path fill="#fff" d="M2 2h3v3H2zM8 2h3v3H8zM5 5h3v3H5zM11 5h3v3h-3zM2 8h3v3H2zM8 8h3v3H8zM5 11h3v3H5zM11 11h3v3h-3z"/></svg></button>
      <button aria-label="Selection cycling" class="grid w-[29px] place-items-center"><svg viewBox="0 0 16 16" class="size-4"><path fill="#7fd0a0" d="M5 6h10v9H5z"/><path d="M2 1v5M0 3h5M5 5h10" stroke="#e8eaee" stroke-width="1.300"/></svg></button>
      <button aria-label="3D object snap" class="grid h-5 w-[21px] place-items-center bg-[#5484bd]"><svg viewBox="0 0 16 16" class="size-4"><path d="M3 1v12h12M1 4l2-3 2 3M12 11l3 2-3 2M10 2L7 7h4l-3 4" fill="none" stroke="#fff" stroke-width="1.200"/></svg></button>
      <button aria-label="Annotation visibility" class="ml-[3px] grid w-[23px] place-items-center"><svg viewBox="0 0 16 16" class="size-4"><path d="M1 15l3-7 2-6h1l2 6 3 7H9L6.500 11 4 15z" fill="#d8dbe0"/><circle cx="13" cy="3" r="2" fill="none" stroke="#d8dbe0"/></svg></button>
      <button aria-label="Auto scale" class="grid w-[23px] place-items-center"><svg viewBox="0 0 16 16" class="size-4"><path d="M2 15l3-7 2-6h1l2 6 3 7h-3l-2.500-4L5 15z" fill="#d8dbe0"/></svg></button>
      <button class="flex h-full w-[51px] items-center justify-center gap-1 border-r-2 border-[#262d38]">1:1000<svg class="size-2"><use href="#caret"/></svg></button>
      <button aria-label="Workspace" class="flex h-full w-[42px] items-center justify-center gap-[7px] border-r-2 border-[#262d38]"><svg class="size-4"><use href="#gear"/></svg><svg class="size-2"><use href="#caret"/></svg></button>
      <button class="flex h-full w-[64px] items-center justify-center gap-[9px] border-r-2 border-[#262d38]"><svg viewBox="0 0 16 16" class="size-4"><path d="M8 7l7 4-7 4-7-4z" fill="#d8dbe0"/><path d="M8 3l7 4-7 4-7-4z" fill="#5aa5e8"/><path d="M8 0l5 3-5 3-5-3z" fill="none" stroke="#d8dbe0" stroke-dasharray="1 1"/></svg>3.500</button>
      <button aria-label="Isolate" class="grid w-[27px] place-items-center"><svg viewBox="0 0 16 16" class="size-4"><path d="M1 1h5v6H1zM5 15l3-5 3 5z" fill="none" stroke="#d8dbe0"/><circle cx="12" cy="5" r="2.500" fill="none" stroke="#d8dbe0"/></svg></button>
      <button aria-label="Hardware acceleration" class="grid h-5 w-[21px] place-items-center bg-[#5484bd]"><svg viewBox="0 0 16 16" class="size-4"><circle cx="8" cy="8" r="7" fill="#7ba6d6" stroke="#fff"/><path d="M6 11l5-7" stroke="#fff" stroke-width="1.300"/></svg></button>
      <button aria-label="Clean screen" class="grid w-[29px] place-items-center"><svg viewBox="0 0 16 16" class="size-4"><path d="M1 2h14v12H1z" fill="none" stroke="#d8dbe0"/><path d="M9 4h4v4zM3 8v4h4z" fill="#d8dbe0"/></svg></button>
      <button aria-label="Customization" class="grid w-[21px] place-items-center"><svg viewBox="0 0 16 16" class="size-4"><path d="M1 3h15M1 8h15M1 13h15" stroke="#d8dbe0" stroke-width="2"/></svg></button>
    </div>
  </footer>

  <!-- windows taskbar -->
  <footer class="relative flex h-7 shrink-0 items-center bg-[#060706] text-white">
    <svg viewBox="0 0 1280 28" preserveAspectRatio="none" class="absolute inset-0 size-full"><path fill="#14110f" d="M630 0h75l60 28h-70zM860 0h110l70 28H895z"/><path fill="#191b1c" d="M860 0h100l65 28H890z"/><path fill="#1d110f" d="M970 0h14l52 28h-14z"/><path fill="#0b0d08" d="M0 0h590l10 28H0zM700 0h120l30 28h-130zM1010 0h90l10 28h-50z"/></svg>
    <div class="relative flex h-full">
      <button aria-label="Start" class="grid w-[33px] place-items-center"><svg viewBox="0 0 16 16" class="size-4"><path fill="#fff" d="M0 2.500l7-1v6H0zM8 1.300L16 0v7.500H8zM0 8.500h7v6l-7-1zM8 8.500h8V16l-8-1.300z"/></svg></button>
      <button aria-label="Search" class="grid w-[34px] place-items-center"><svg viewBox="0 0 16 16" class="size-4"><circle cx="10" cy="6" r="5" fill="none" stroke="#fff" stroke-width="1.300"/><path d="M6.500 9.500L1 15" stroke="#fff" stroke-width="1.500"/></svg></button>
      <button aria-label="Task view" class="grid w-[35px] place-items-center"><svg viewBox="0 0 16 16" class="size-4"><path d="M1 5h9v6H1zM1 1v2h9V1M1 15v-2h9v2M14 1v14" fill="none" stroke="#fff" stroke-width="1.300"/><path fill="#fff" d="M12.500 4h3v3h-3z"/></svg></button>
      <button aria-label="Alarms" class="grid w-[38px] place-items-center"><svg viewBox="0 0 16 16" class="size-4"><circle cx="8" cy="9" r="6" fill="none" stroke="#fff" stroke-width="1.500"/><path d="M5 7l3 3 3-3M1 4l3-3M15 4l-3-3" fill="none" stroke="#fff" stroke-width="1.600"/></svg></button>
      <button aria-label="Calculator" class="grid w-[32px] place-items-center"><svg viewBox="0 0 16 16" class="size-4"><path fill="#fff" d="M2 0h12v16H2z"/><path d="M4 3.500h8" stroke="#111" stroke-width="2"/><path d="M4 7.500h8M4 10.500h8M4 13.500h8" stroke="#111" stroke-width="1.500" stroke-dasharray="2 1"/></svg></button>
      <button aria-label="Axis" class="grid w-[36px] place-items-center"><svg viewBox="0 0 16 16" class="size-4"><path fill="#1d7a36" d="M0 0h16v16H0z"/><path d="M3 3h4v4M9 3l4 4M13 3L9 7M3 10h4v4H3zM9 10l4 4M13 10l-4 4" stroke="#d8f0dc" fill="none" stroke-width="1.200"/></svg></button>
      <button aria-label="Chrome" class="mr-[5px] ml-1 grid w-[26px] place-items-center border-b-[3px] border-[#76b9ed] pt-[3px]"><svg viewBox="0 0 16 16" class="size-[14px]"><circle cx="8" cy="8" r="7.500" fill="#f6c026"/><path d="M8 8L1.500 4A7.500 7.500 0 0 1 15 5z" fill="#de4032"/><path d="M8 8L1.500 4a7.500 7.500 0 0 0 5 11.400z" fill="#2c9e4b"/><circle cx="8" cy="8" r="3.500" fill="#fff"/><circle cx="8" cy="8" r="2.700" fill="#3f83f0"/></svg></button>
      <button aria-label="Civil 3D" class="grid w-[33px] place-items-center border-b-[3px] border-[#76b9ed] bg-[#454748] pt-[3px]"><svg class="size-4"><use href="#clogo"/></svg></button>
    </div>
    <div class="relative ml-auto flex items-center pr-[22px]">
      <svg viewBox="0 0 10 10" class="mr-[15px] size-[11px]"><path d="M1 7l4-4 4 4" fill="none" stroke="#fff" stroke-width="1.200"/></svg>
      <svg viewBox="0 0 10 16" class="mr-[14px] h-4 w-2.5"><rect x="2" y="0" width="6" height="10" rx="2" fill="#fff"/><path d="M1 9q4 5 8 0M5 12v4" stroke="#fff" fill="none"/></svg>
      <svg viewBox="0 0 14 14" class="mr-2 size-[14px]"><path d="M1 13Q1 2 13 1M4 13q0-8 9-9M7 13q0-5 6-6M10 13q0-2 3-3" fill="none" stroke="#fff"/></svg>
      <svg viewBox="0 0 14 14" class="mr-[10px] size-[14px]"><path d="M1 5h2l4-3v10L3 9H1zM9 5l4 4M13 5L9 9" fill="none" stroke="#fff"/></svg>
      <span class="w-[34px]">POR</span><span class="w-[39px]">19:06</span>
      <svg viewBox="0 0 16 16" class="size-4"><path fill="#fff" d="M1 1h14v11H9v3l-3-3H1z"/><path d="M3 4h10M3 6.500h10M3 9h6" stroke="#111"/><circle cx="12" cy="12" r="3" fill="#bbb" stroke="#111"/></svg>
    </div>
  </footer>

  <!-- capture noise along the right edge of the screen -->
  <svg class="absolute top-0 right-0 h-[692px] w-[5px]"><filter id="noise" x="0" y="0" width="100%" height="100%"><feTurbulence type="fractalNoise" baseFrequency=".9" numOctaves="2" seed="4"/><feColorMatrix values="3.500 0 0 0 -1.850 0 3.500 0 0 -1.850 0 0 3.500 0 -1.850 0 0 0 0 1"/></filter><rect width="5" height="692" filter="url(#noise)"/></svg>

  <!-- Export LandXML dialog -->
  <form role="dialog" aria-labelledby="dlg" class="absolute top-[101px] left-[339px] flex h-[474px] w-[603px] flex-col border border-[#1a7cc0] bg-[#f0f0f0] font-['Roboto','Liberation_Sans',sans-serif] text-[11px] leading-4 text-black">
    <div class="flex h-7 shrink-0 items-center bg-[#0063b1] pr-2 pb-[2px] pl-[7px] text-white">
      <svg class="mr-1 size-4"><use href="#clogo"/></svg>
      <h2 id="dlg" class="flex-1 font-['Open_Sans','Noto_Sans',sans-serif]">Export LandXML</h2>
      <button type="button" aria-label="Close dialog"><svg class="size-3"><use href="#cross"/></svg></button>
    </div>
    <div class="flex h-[33px] shrink-0 items-center pb-px">
      <label for="savein" class="w-[120px] pr-[11px] text-right">Save in:</label>
      <div class="relative h-[21px] w-[230px]">
        <svg class="pointer-events-none absolute top-0.5 left-1 size-4"><use href="#folder"/></svg>
        <select id="savein" class="size-full appearance-none border border-[#adadad] bg-[#e1e1e1] pl-5"><option>CRITERIO</option></select>
        <svg class="pointer-events-none absolute top-1.5 right-0.5 size-[9px] text-[#333]"><use href="#chev"/></svg>
      </div>
      <div class="flex items-center gap-[7px] pl-[10px]">
        <button type="button" aria-label="Back"><svg class="size-4"><use href="#back"/></svg></button>
        <button type="button" aria-label="Up one level"><svg class="size-4"><use href="#fup"/></svg></button>
        <button type="button" aria-label="Search the web"><svg class="size-4"><use href="#web"/></svg></button>
        <button type="button" aria-label="Delete"><svg class="size-4"><use href="#del"/></svg></button>
        <button type="button" aria-label="Create new folder"><svg class="size-4"><use href="#fnew"/></svg></button>
      </div>
      <button type="button" class="ml-[19px] flex w-[56px] items-center justify-between pr-[9px]"><span><u>V</u>iews</span><svg class="size-2"><use href="#caret"/></svg></button>
      <button type="button" class="flex w-[49px] items-center justify-between pr-1"><span>Too<u>l</u>s</span><svg class="size-2"><use href="#caret"/></svg></button>
    </div>
    <div class="flex min-h-0 flex-1 pb-[10px] pl-[4px]">
      <ul class="flex w-[107px] shrink-0 flex-col items-center border border-[#71767c] bg-[#bfcddc] pt-[2px] pr-[2px] text-center text-[#f7fafc] outline outline-1 -outline-offset-2 outline-white">
        <li><button type="button" class="flex h-[55px] flex-col items-center justify-between pt-1"><svg viewBox="0 0 28 28" class="h-7 w-7"><path d="M17 9h9v16h-9z" fill="#fff" stroke="#777"/><path d="M19 13h6M19 16h6M19 19h6" stroke="#6a94b8"/><circle cx="9" cy="8" r="7.500" fill="#e8e6df" stroke="#7d7d78" stroke-width="1.500"/><path d="M9 8V3M9 8l4 1" stroke="#333"/><path d="M4 16h16v11H4z" fill="#fff" stroke="#999"/><path fill="#4c95c9" d="M6 18h12v4H6z"/><path fill="#23605f" d="M6 22l6-1 6 2v2H6z"/></svg>History</button></li>
        <li><button type="button" class="flex h-14 flex-col items-center justify-between pt-1"><svg viewBox="0 0 28 28" class="h-7 w-7"><path d="M4 1h14l6 5v21H4z" fill="#fff" stroke="#8a8a8a"/><path d="M18 1v5h6" fill="#ddd" stroke="#999"/><path d="M7 8l4-5v5M8 6h3" stroke="#1f78b8" stroke-width="1.500" fill="none"/><path d="M7 11.500h14" stroke="#2f93cf" stroke-width="1.500"/><path d="M7 15h6M7 18h6M7 21h14M7 24h14M13 5h4M13 8h8" stroke="#999"/><path fill="#2a6f96" d="M15 13h7v6h-7z"/></svg>Documents</button></li>
        <li><button type="button" class="flex h-14 flex-col items-center justify-between pt-1"><svg viewBox="0 0 28 28" class="h-7 w-7"><path d="M.5 5.500h27v18H.5z" fill="#1f97f0" stroke="#1a5c93"/><path fill="#3fa9f5" d="M1 17L17 6h10v5L9 22H1z"/><path d="M21 22h5" stroke="#fff" stroke-dasharray="1 1"/></svg>Desktop</button></li>
        <li><button type="button" class="flex h-[58px] flex-col items-center justify-between pt-0.5"><span class="grid size-[38px] place-items-center border border-t-[#444] border-r-[#d5dfe9] border-b-[#d5dfe9] border-l-[#444]"><svg viewBox="0 0 28 28" class="size-7"><path fill="#eec255" d="M6 2h15v12l2 9-6 2-11-3z"/><path fill="#ffe08a" d="M6 2l5 3v22l-5-4z"/></svg></span>CRITERIO</button></li>
      </ul>
      <div class="flex min-w-0 flex-1 flex-col pl-[9px]">
        <div class="relative mr-2 h-[308px] overflow-hidden bg-white font-['Open_Sans','Noto_Sans',sans-serif]">
          <svg class="absolute top-0 left-[123px] size-2.5 rotate-180 text-[#555]"><use href="#chev"/></svg>
          <table class="h-full w-full table-fixed text-left">
            <colgroup><col class="w-[255px]"><col class="w-[135px]"><col></colgroup>
            <thead><tr class="h-[22px] align-middle"><th class="border-r border-[#e3e9ef] pl-2.5 font-normal">Nome</th><th class="border-r border-[#e3e9ef] pl-1.5 font-normal">Data de modificação</th><th class="pl-1.5 font-normal">Tipo</th></tr></thead>
            <tbody><tr class="h-[19px] whitespace-nowrap"><td class="border-r border-[#e3e9ef] pl-[22px]"><span class="flex items-center gap-[2px]"><svg class="size-4"><use href="#folder"/></svg>MEDIÇÃO 1</span></td><td class="border-r border-[#e3e9ef] pl-1.5">15/12/2019 18:32</td><td class="pl-[5px]">Pasta de arquivos</td></tr>
            <tr><td class="border-r border-[#e3e9ef]"></td><td class="border-r border-[#e3e9ef]"></td><td></td></tr></tbody>
          </table>
        </div>
        <div class="mr-2 flex h-4 items-center text-[#333]">
          <svg class="mr-[3px] ml-[3px] size-[10px] rotate-90"><use href="#chev"/></svg>
          <span class="h-[14px] w-[361px] bg-[#cbcbcb]"></span>
          <svg class="mr-[3px] ml-auto size-[10px] -rotate-90"><use href="#chev"/></svg>
        </div>
        <div class="mt-auto -mb-px grid grid-cols-[72px_320px_80px] gap-y-[9px]">
          <label for="fname" class="pl-0.5">File name:</label>
          <div class="relative h-5">
            <input id="fname" type="text" value="E" class="size-full border border-[#2a8ac4] bg-white px-[3px] outline-none">
            <span class="absolute top-[3px] left-[10px] h-[13px] border-l border-black"></span>
            <svg class="pointer-events-none absolute top-1.5 right-[3px] size-[10px] text-[#444]"><use href="#chev"/></svg>
          </div>
          <button type="submit" class="ml-[3px] h-[19px] border border-[#adadad] bg-[#e1e1e1]"><u>S</u>ave</button>
          <label for="ftype" class="pl-0.5">Files of type:</label>
          <div class="relative h-5">
            <select id="ftype" class="size-full appearance-none border border-[#adadad] bg-[#e1e1e1] pl-[3px]"><option>LandXML (*.xml)</option></select>
            <svg class="pointer-events-none absolute top-1.5 right-[3px] size-[10px] text-[#444]"><use href="#chev"/></svg>
          </div>
          <button type="button" class="ml-[3px] h-5 border border-[#adadad] bg-[#e1e1e1]">Cancel</button>
        </div>
      </div>
    </div>
  </form>

  <!-- highlighted mouse pointer -->
  <svg viewBox="0 0 60 60" class="pointer-events-none absolute top-[502px] left-[693px] size-[60px]"><circle cx="30" cy="30" r="27.500" fill="none" stroke="#47e84a" stroke-opacity=".7" stroke-width="5"/><path d="M29 24h3M33 24h3M32.500 24v14M29 38h3M33 38h3" stroke="#111" fill="none"/></svg>
</div>

<script>
  // Each row: guide cells from the root outwards, icon, label.
  const rows = [
    ["root", "t-dwg", "Drawing2"],
    ["v t", "t-pt", "Points"],
    ["v plus", "t-pg", "Point Groups"],
    ["v minus", "t-sf", "Surfaces"],
    ["v v last", "t-sf", "TN"],
    ["v v - t", "t-mask", "Masks"],
    ["v v - t", "t-water", "Watersheds"],
    ["v v - last", "t-def", "Definition"],
    ["v v - - t", "t-bnd", "Boundaries"],
    ["v v - - t", "t-brk", "Breaklines"],
    ["v v - - t", "t-cnt", "Contours"],
    ["v v - - t", "t-dem", "DEM Files"],
    ["v v - - dot", "t-obj", "Drawing Objects"],
    ["v v - - dot", "t-edit", "Edits"],
    ["v v - - t", "t-pf", "Point Files"],
    ["v v - - t", "t-pg", "Point Groups"],
    ["v v - - t", "t-psq", "Point Survey Queries"],
    ["v v - - l", "t-fsq", "Figure Survey Queries"],
    ["v plus", "t-al", "Alignments"],
    ["v t", "t-fl", "Feature Lines"],
    ["v plus", "t-site", "Sites"],
  ];
  document.getElementById("tree").innerHTML = rows.map(([guides, icon, label]) => {
    const cells = guides.split(" ").map(g => g === "-"
      ? '<span class="w-[18px] shrink-0"></span>'
      : `<svg class="h-[19px] w-[18px] shrink-0"><use href="#g-${g}"/></svg>`).join("");
    const text = label === "TN" ? '<span class="ml-[2px] flex-1 bg-[#a0a0a0] pl-1 leading-[18px]">TN</span>'
      : label === "Drawing2" ? '<span class="ml-1.5 font-bold">Drawing2</span>'
      : `<span class="ml-1.5">${label}</span>`;
    return `<li class="flex min-h-0 items-center whitespace-nowrap">${cells}<svg class="ml-px size-4 shrink-0"><use href="#${icon}"/></svg>${text}</li>`;
  }).join("");
</script>
</body>
</html>
